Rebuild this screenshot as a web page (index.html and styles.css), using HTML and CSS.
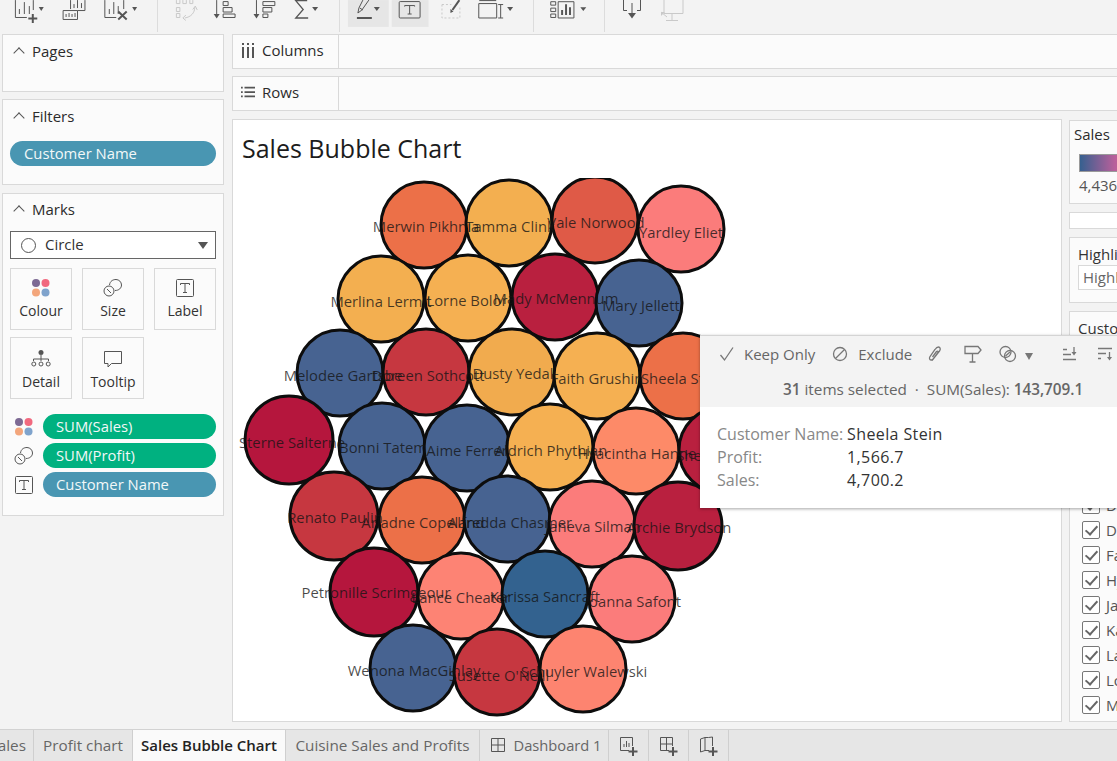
FILE: index.html
```html
<!DOCTYPE html>
<html lang="en">
<head>
  <meta charset="UTF-8" />
  <title>Sales Bubble Chart</title>
  <link rel="stylesheet" href="styles.css">
</head>
<body>
  <div class="toolbar">
    <svg class="tools tools-a" viewBox="0 0 158 32">
      <g class="ic">
        <path d="M15.500 0V17.500H27M33.500 0V10M19.500 14V9M24.500 14V2M29.500 14V6"/>
        <path class="thick" d="M33 14V23M28.500 18.500H37.500"/>
        <path class="fill" d="M39 7h5l-2.500 4z"/>
        <path d="M71 9V0M85.500 0V10.500H78M74.500 8V4M78 8V0M82 8V3"/>
        <path d="M78 10.500V19.500H63.500V10.500H78M66.500 17V14M69.500 17V13M72.500 17V14M75.500 17V13"/>
        <path d="M105.500 0V17.500H117M124.500 0V9M110 14V9M114.500 14V2M119 14V6"/>
        <path class="thick" d="M119 11.500L127.500 19.500M127.500 11.500L119 19.500"/>
        <path class="fill" d="M133 7h5l-2.500 4z"/>
      </g>
    </svg>
    <svg class="tools tools-b" viewBox="158 0 182 32">
      <g class="ic faint">
        <path d="M176.500 0V3.500H180V0M183 0V3.500H186.500V0M190 0V3.500H193V0M176.500 7.500H180V11.500H176.500ZM176.500 13.500H180V17.500H176.500ZM195 7C195 13 191 17 185 18M193 9.500L195.500 6L197.500 10M186 15L183 18L186 20.500"/>
      </g>
      <g class="ic">
        <path d="M217 0V16"/>
        <path class="fill" d="M214 14H220L217 18.500Z"/>
        <path d="M223.500 1.500H228.500V5.500H223.500ZM223.500 7.500H232.500V12H223.500ZM223.500 14H235.500V17.500H223.500Z"/>
        <path d="M257 0V16"/>
        <path class="fill" d="M254 14H260L257 18.500Z"/>
        <path d="M263.500 1.500H275.500V5.500H263.500ZM263.500 7.500H272.500V12H263.500ZM263.500 14H268.500V17.500H263.500Z"/>
        <path d="M308 0.500H296.500L304 9.500L296.500 18H309" stroke-width="1.300"/>
        <path class="fill" d="M313 7h6l-3 4z"/>
      </g>
    </svg>
    <svg class="tools tools-c" viewBox="340 0 194 32">
      <rect class="on" x="348" y="0" width="41" height="27"/>
      <rect class="on" x="392" y="0" width="37" height="27"/>
      <g class="ic">
        <path d="M363 0L359 8L358 13L362 10L369 0M360 8L363 10"/>
        <path class="thick" d="M357 18H372"/>
        <path class="fill" d="M374 7h6l-3 4z"/>
        <rect x="399.500" y="1.500" width="21" height="16.500" rx="1"/>
        <path d="M405 6.500V5.500H415V6.500M410 5.500V14M408 14H412"/>
        <path class="faint" stroke-dasharray="2 2" d="M442.500 4.500H452M442.500 4.500V18H460.500V7"/>
        <path class="thick" d="M460 0L453 10"/>
        <path class="fill" d="M451 9L454 11.500L451 13Z"/>
        <path d="M479.500 3.500H497.500V18H479.500ZM480 0.500H497M499 4.500H504M499 18H504M501.500 4.500V18"/>
        <path class="fill" d="M508 7h6l-3 4z"/>
      </g>
    </svg>
    <svg class="tools tools-d" viewBox="534 0 71 32">
      <g class="ic">
        <path d="M551 1.500H556V5H551ZM551 8H556V11.500H551ZM551 14H556V17.500H551ZM558.500 1.500H574.500V18H558.500Z"/>
        <path class="thick" d="M562.500 15V10M566.500 15V4M570.500 15V7"/>
        <path class="fill" d="M581 7h6l-3 4z"/>
      </g>
    </svg>
    <svg class="tools tools-e" viewBox="605 0 95 32">
      <g class="ic">
        <path d="M623.500 0V10.500H627M640.500 0V10.500H637M632 3V14"/>
        <path class="fill" d="M628 13H636L632 18.500Z"/>
      </g>
      <g class="ic faint">
        <path d="M664 0V13.500H683V0M672 13.500V20M666 20.500H678M661 12L667 17"/>
        <path class="light" d="M661 12H665L661 16Z"/>
      </g>
    </svg>
  </div>

  <div class="main">
    <div class="side">
      <div class="panel pages-panel">
        <div class="panel-title"><span class="chev"></span>Pages</div>
      </div>
      <div class="panel filters-panel">
        <div class="panel-title"><span class="chev"></span>Filters</div>
        <div class="pill blue">Customer Name</div>
      </div>
      <div class="panel marks-panel">
        <div class="panel-title"><span class="chev"></span>Marks</div>
        <div class="mark-select">
          <span class="ring"></span>
          <span class="mark-name">Circle</span>
          <span class="caret"></span>
        </div>
        <div class="mark-cards">
          <div class="mark-card">
            <svg width="20" height="20" viewBox="0 0 20 20"><use href="#i-colour"/></svg>
            Colour
          </div>
          <div class="mark-card">
            <svg width="20" height="20" viewBox="0 0 20 20"><use href="#i-size"/></svg>
            Size
          </div>
          <div class="mark-card">
            <svg width="20" height="20" viewBox="0 0 20 20"><use href="#i-label"/></svg>
            Label
          </div>
          <div class="mark-card low">
            <svg width="20" height="20" viewBox="0 0 20 20">
              <g class="ic">
                <circle class="fill" cx="10" cy="3.500" r="2.500"/>
                <path d="M10 6V12M2.500 12V10H17.500V12"/>
                <circle cx="2.800" cy="15" r="2"/><circle cx="10" cy="15" r="2"/><circle cx="17.200" cy="15" r="2"/>
              </g>
            </svg>
            Detail
          </div>
          <div class="mark-card low">
            <svg width="20" height="20" viewBox="0 0 20 20">
              <path class="ic" d="M1.500 2.500H18.500V14.500H8.500L5 18V14.500H1.500Z"/>
            </svg>
            Tooltip
          </div>
        </div>
        <div class="field-row">
          <svg width="20" height="20" viewBox="0 0 20 20"><use href="#i-colour"/></svg>
          <div class="pill green">SUM(Sales)</div>
        </div>
        <div class="field-row">
          <svg width="20" height="20" viewBox="0 0 20 20"><use href="#i-size"/></svg>
          <div class="pill green">SUM(Profit)</div>
        </div>
        <div class="field-row">
          <svg width="20" height="20" viewBox="0 0 20 20"><use href="#i-label"/></svg>
          <div class="pill blue">Customer Name</div>
        </div>
      </div>
    </div>

    <div class="work">
      <div class="shelf">
        <div class="shelf-name">
          <svg width="14" height="16" viewBox="0 0 14 16">
            <path class="ic thick" d="M2 5V16M7 5V16M12 5V16M2 1V3M7 1V3M12 1V3"/>
          </svg>
          Columns
        </div>
      </div>
      <div class="shelf">
        <div class="shelf-name">
          <svg width="14" height="14" viewBox="0 0 16 14">
            <path class="ic thick" d="M4 2H16M4 7H16M4 12H16M0 2H2M0 7H2M0 12H2"/>
          </svg>
          Rows
        </div>
      </div>
      <div class="view">
        <div class="chart">
          <h1 class="chart-title">Sales Bubble Chart</h1>
          <svg class="bubbles" viewBox="233 178 828 543">
            <g class="bubble-set">
              <circle cx="424" cy="225" r="43" fill="#ec7048"/>
              <circle cx="509" cy="223" r="43" fill="#f3af50"/>
              <circle cx="595" cy="220" r="43" fill="#df5a47"/>
              <circle cx="681" cy="229" r="43" fill="#fb7c7b"/>
              <circle cx="381" cy="299" r="43" fill="#f3af50"/>
              <circle cx="468" cy="298" r="43" fill="#f5b052"/>
              <circle cx="555" cy="297" r="43" fill="#b9203f"/>
              <circle cx="639" cy="303" r="43" fill="#476391"/>
              <circle cx="340" cy="373" r="43" fill="#476391"/>
              <circle cx="426" cy="372" r="43" fill="#c63740"/>
              <circle cx="512" cy="372" r="43" fill="#f1ab4e"/>
              <circle cx="597" cy="376" r="43" fill="#f5b052"/>
              <circle cx="683" cy="376" r="43" fill="#ec7048"/>
              <circle cx="289" cy="440" r="44" fill="#b5163d"/>
              <circle cx="382" cy="446" r="43" fill="#476391"/>
              <circle cx="467" cy="448" r="43" fill="#476391"/>
              <circle cx="550" cy="447" r="43" fill="#f5b052"/>
              <circle cx="636" cy="451" r="43" fill="#fd8a68"/>
              <circle cx="722" cy="450" r="43" fill="#b9203f"/>
              <circle cx="334" cy="516" r="44" fill="#c63740"/>
              <circle cx="422" cy="520" r="43" fill="#ec7048"/>
              <circle cx="507" cy="519" r="43" fill="#476391"/>
              <circle cx="592" cy="524" r="43" fill="#fb7c7b"/>
              <circle cx="678" cy="526" r="44" fill="#b9203f"/>
              <circle cx="374" cy="592" r="44" fill="#b5163d"/>
              <circle cx="461" cy="596" r="43" fill="#fd8374"/>
              <circle cx="545" cy="594" r="43" fill="#33628f"/>
              <circle cx="632" cy="599" r="43" fill="#fb7c7b"/>
              <circle cx="413" cy="668" r="43" fill="#476391"/>
              <circle cx="497" cy="672" r="43" fill="#c63740"/>
              <circle cx="583" cy="669" r="43" fill="#fd8470"/>
            </g>
            <g class="bubble-labels">
              <text x="426" y="232">Merwin Pikhnia</text>
              <text x="510" y="232">Tamma Clink</text>
              <text x="596" y="228">Vale Norwood</text>
              <text x="681" y="238">Yardley Eliet</text>
              <text x="381" y="307">Merlina Lermit</text>
              <text x="467" y="306">Lorne Bolor</text>
              <text x="556" y="304">Mady McMennum</text>
              <text x="641" y="311">Mary Jellett</text>
              <text x="343" y="381">Melodee Gartsbe</text>
              <text x="428" y="381">Doreen Sothcott</text>
              <text x="513" y="379">Dusty Yedal</text>
              <text x="597" y="384">Faith Grushin</text>
              <text x="683" y="384">Sheela Stein</text>
              <text x="292" y="448">Sterne Salterne</text>
              <text x="383" y="453">Bonni Tatem</text>
              <text x="467" y="456">Aime Ferrer</text>
              <text x="551" y="456">Aldrich Phythian</text>
              <text x="637" y="459">Hyacintha Hanne</text>
              <text x="720" y="461">Sheley Lamb</text>
              <text x="335" y="523">Renato Paulin</text>
              <text x="423" y="528">Ariadne Copeland</text>
              <text x="510" y="528">Alfredda Chasmer</text>
              <text x="593" y="532">Janeva Silman</text>
              <text x="679" y="533">Archie Brydson</text>
              <text x="376" y="598">Petronille Scrimgeour</text>
              <text x="461" y="603">Lance Cheater</text>
              <text x="545" y="602">Karissa Sancraft</text>
              <text x="633" y="607">Joanna Safont</text>
              <text x="414" y="676">Wenona MacGinlay</text>
              <text x="499" y="681">Susette O'Neill</text>
              <text x="584" y="677">Schuyler Walewski</text>
            </g>
          </svg>
        </div>

        <div class="right">
          <div class="card legend">
            <div class="legend-title">Sales</div>
            <div class="ramp"></div>
            <div class="ramp-min">4,436.4</div>
          </div>
          <div class="card blank"></div>
          <div class="card highlight">
            <div class="card-title">Highlight Customer Name</div>
            <div class="highlight-box">Highlight Customer Name</div>
          </div>
          <div class="card custom">
            <div class="card-title">Customer Name</div>
            <ul class="checks">
              <li><span class="check"></span>Dennie Stove</li>
              <li><span class="check"></span>Doreen Sothcott</li>
              <li><span class="check"></span>Faith Grushin</li>
              <li><span class="check"></span>Hyacintha Hanne</li>
              <li><span class="check"></span>Janeva Silman</li>
              <li><span class="check"></span>Karissa Sancraft</li>
              <li><span class="check"></span>Lance Cheater</li>
              <li><span class="check"></span>Lorne Bolor</li>
              <li><span class="check"></span>Mady McMennum</li>
            </ul>
          </div>
        </div>
      </div>
    </div>
  </div>

  <div class="tabs">
    <div class="tab tab-cut">Sales</div>
    <div class="tab tab-profit">Profit chart</div>
    <div class="tab tab-active">Sales Bubble Chart</div>
    <div class="tab tab-cuisine">Cuisine Sales and Profits</div>
    <div class="tab tab-dash">
      <svg width="14" height="14" viewBox="0 0 14 14"><path class="ic" d="M.5.5H13.500V13.500H.5ZM7 .5V13.500M.5 7H13.500"/></svg>
      Dashboard 1
    </div>
    <div class="tab tab-new">
      <svg width="20" height="20" viewBox="0 0 20 20"><path class="ic" d="M10 14.500H1.500V1.500H13.500V10M5 11V8M7.500 11V5M10 11V7"/><path class="ic thick" d="M14 11V20M9.500 15.500H18.500"/></svg>
    </div>
    <div class="tab tab-new">
      <svg width="20" height="20" viewBox="0 0 20 20"><path class="ic" d="M10 14.500H1.500V1.500H13.500V10M7.500 1.500V14.500M1.500 8H13.500"/><path class="ic thick" d="M14 11V20M9.500 15.500H18.500"/></svg>
    </div>
    <div class="tab tab-new">
      <svg width="20" height="20" viewBox="0 0 20 20"><path class="ic" d="M10 14.500H6L1.500 16V3L6 1.500H9.500L13.500 1V10M6 1.500V14.500"/><path class="ic thick" d="M14 11V20M9.500 15.500H18.500"/></svg>
    </div>
  </div>

  <div class="tooltip">
    <div class="tip-head">
      <div class="tip-actions">
        <svg class="a-check" width="16" height="16" viewBox="0 0 16 16"><path class="ic grey" d="M1.500 9L5.500 14L14 1.500"/></svg>
        <span class="tip-action a-keep">Keep Only</span>
        <svg class="a-no" width="16" height="16" viewBox="0 0 16 16"><circle class="ic grey" cx="8" cy="8" r="6.500"/><path class="ic grey" d="M3.500 12.500L12.500 3.500"/></svg>
        <span class="tip-action a-exclude">Exclude</span>
        <svg class="a-clip" width="16" height="16" viewBox="0 0 16 16"><path class="ic grey" d="M5 14.500L12.500 5C14 3 13 1 11.500 1C10 1 9 2 8 3.500L3 10.500C2 12 2.500 14 4 14C5.500 14 6 13 7 12L11 6.500C11.500 5.500 10.500 4.500 9.500 5.500L5.500 11"/></svg>
        <svg class="a-sign" width="18" height="18" viewBox="0 0 18 18"><path class="ic grey" d="M1 1.500H14L17 5L14 8.500H1ZM8.500 8.500V17M5.500 17H11.500"/></svg>
        <svg class="a-venn" width="18" height="18" viewBox="0 0 18 18"><circle class="ic grey" cx="6.500" cy="7" r="5.500"/><circle class="ic grey" cx="11" cy="11" r="5.500"/><path class="ic grey" d="M6.500 11L11 7"/></svg>
        <span class="caret a-caret"></span>
        <svg class="a-asc" width="16" height="14" viewBox="0 0 16 14"><path class="ic grey thick" d="M1 12.500H14M1 7.500H9M1 2.500H5M12 0V6"/><path class="fill-grey" d="M9.500 5H14.500L12 8.500Z"/></svg>
        <svg class="a-desc" width="16" height="14" viewBox="0 0 16 14"><path class="ic grey thick" d="M1 1.500H15M1 6.500H9M1 11.500H4M12.500 5V11"/><path class="fill-grey" d="M10 10H15L12.500 13.500Z"/></svg>
      </div>
      <div class="tip-summary"><b>31</b> items selected &nbsp;·&nbsp; SUM(Sales): <b>143,709.1</b></div>
    </div>
    <dl class="tip-body">
      <dt>Customer Name:</dt><dd>Sheela Stein</dd>
      <dt>Profit:</dt><dd>1,566.7</dd>
      <dt>Sales:</dt><dd>4,700.2</dd>
    </dl>
  </div>

  <svg class="defs" width="0" height="0">
    <symbol id="i-colour" viewBox="0 0 20 20">
      <circle cx="5" cy="5" r="4" fill="#7d6a94"/>
      <circle cx="14.500" cy="5" r="4" fill="#f1697f"/>
      <circle cx="5" cy="14.500" r="4" fill="#f3a67c"/>
      <circle cx="14.500" cy="14.500" r="4" fill="#7fa3cc"/>
    </symbol>
    <symbol id="i-size" viewBox="0 0 20 20">
      <circle class="ic" cx="6" cy="13" r="5"/>
      <path class="ic" d="M4 11L8 15M6.500 7C7 3 10 1.500 13 1.500C16 1.500 18.500 4 18.500 7C18.500 10 16 12.500 12 12.500"/>
    </symbol>
    <symbol id="i-label" viewBox="0 0 20 20">
      <rect class="ic" x="1.500" y="1.500" width="17" height="17" rx="1"/>
      <path class="ic" d="M5.500 7V5.500H14.500V7M10 5.500V14.500M8 14.500H12"/>
    </symbol>
  </svg>
</body>
</html>
```

FILE: styles.css
```css
html, body {
  margin: 0;
  height: 761px;
  overflow: hidden;
}
body {
  position: relative;
  width: 1117px;
  display: flex;
  flex-direction: column;
  background: #f3f3f3;
  font-family: 'Open Sans', sans-serif;
  font-size: 15px;
  color: #333;
}
.defs {
  position: absolute;
}

/* icons */
.ic {
  fill: none;
  stroke: #555;
  stroke-width: 1;
}
.ic .thick, .thick {
  stroke-width: 2;
}
.ic .fill, .fill {
  fill: #555;
  stroke: none;
}
.ic .faint, .faint {
  stroke: #c9c9c9;
}
.ic .light {
  fill: #c9c9c9;
  stroke: none;
}
.grey {
  stroke: #777;
  stroke-width: 1.3;
}
.fill-grey {
  fill: #777;
}

/* top toolbar */
.toolbar {
  height: 34px;
  display: flex;
  flex: none;
}
.tools {
  height: 32px;
  border-right: 1px solid #dcdcdc;
  box-sizing: content-box;
}
.tools-a { width: 157px; }
.tools-b { width: 181px; }
.tools-c { width: 193px; }
.tools-d { width: 70px; }
.tools-e { width: 95px; border-right: 0; }
.on {
  fill: #e6e6e6;
}

.main {
  flex: 1;
  display: flex;
  min-height: 0;
  padding-bottom: 7px;
}

/* left column */
.side {
  width: 222px;
  margin: 0 8px 0 2px;
  flex: none;
  display: flex;
  flex-direction: column;
  gap: 7px;
}
.panel {
  background: #fbfbfb;
  border: 1px solid #d9d9d9;
  box-sizing: border-box;
}
.pages-panel { height: 58px; }
.filters-panel { height: 86px; }
.marks-panel { height: 323px; margin-top: 1px; }
.panel-title {
  display: flex;
  align-items: center;
  height: 32px;
  padding-left: 10px;
  color: #2b2b2b;
}
.marks-panel .panel-title { height: 30px; }
.chev {
  width: 7px;
  height: 7px;
  margin: 4px 9px 0 2px;
  border-left: 1px solid #555;
  border-top: 1px solid #555;
  transform: rotate(45deg);
}
.pill {
  height: 25px;
  line-height: 25px;
  border-radius: 13px;
  padding-left: 13px;
  font-size: 14.800px;
  color: #f2f8f8;
}
.pill.blue { background: #4996b2; }
.pill.green { background: #00b180; }
.filters-panel .pill {
  margin: 9px 7px 0;
  padding-left: 14px;
}

.mark-select {
  height: 28px;
  margin: 7px 7px 0;
  border: 1px solid #666;
  background: #fff;
  box-sizing: border-box;
  display: flex;
  align-items: center;
  padding: 0 10px 2px;
}
.ring {
  width: 13px;
  height: 13px;
  border: 1px solid #555;
  border-radius: 50%;
  margin: 2px 9px 0 0;
}
.mark-name { flex: 1; }
.caret {
  width: 0;
  height: 0;
  border-left: 5px solid transparent;
  border-right: 5px solid transparent;
  border-top: 7px solid #555;
  margin-right: -3px;
}
.mark-select .caret { margin-top: 2px; }
.mark-cards {
  display: grid;
  grid-template-columns: repeat(3, 62px);
  grid-auto-rows: 62px;
  column-gap: 10px;
  row-gap: 7px;
  margin: 9px 7px 15px;
}
.mark-card {
  border: 1px solid #d9d9d9;
  box-sizing: border-box;
  display: flex;
  flex-direction: column;
  align-items: center;
  justify-content: center;
  gap: 3px;
  font-size: 14px;
  color: #333;
}
.mark-card.low {
  padding-top: 3px;
}
.field-row {
  display: flex;
  align-items: center;
  gap: 9px;
  height: 25px;
  margin: 0 7px 4px 11px;
}
.field-row .pill {
  flex: 1;
}

/* shelves, chart and the cards beside it */
.work {
  flex: 1;
  min-width: 0;
  display: flex;
  flex-direction: column;
  gap: 7px;
}
.shelf {
  height: 35px;
  flex: none;
  background: #fbfbfb;
  border: 1px solid #d9d9d9;
  border-right: 0;
  box-sizing: border-box;
}
.shelf + .shelf {
  margin-bottom: 1px;
}
.shelf-name {
  width: 106px;
  height: 100%;
  border-right: 1px solid #d9d9d9;
  display: flex;
  align-items: center;
  gap: 7px;
  padding: 0 0 4px 8px;
  box-sizing: border-box;
  color: #2b2b2b;
}
.view {
  flex: 1;
  min-height: 0;
  display: flex;
  gap: 7px;
}
.chart {
  width: 830px;
  flex: none;
  display: flex;
  flex-direction: column;
  background: #fff;
  border: 1px solid #d9d9d9;
  box-sizing: border-box;
  min-height: 0;
}
.chart-title {
  margin: 0;
  height: 58px;
  flex: none;
  box-sizing: border-box;
  padding: 10px 0 0 9px;
  font-size: 25px;
  line-height: 36px;
  font-weight: 400;
  color: #1c1c1c;
}
.bubbles {
  width: 828px;
  height: 543px;
  display: block;
}
.bubble-set circle {
  stroke: #0d0d0d;
  stroke-width: 3;
}
.bubble-labels text {
  text-anchor: middle;
  font-size: 14.800px;
  fill: rgba(20, 20, 20, 0.78);
}

.right {
  flex: 1;
  min-width: 0;
  display: flex;
  flex-direction: column;
  gap: 8px;
}
.card {
  background: #fbfbfb;
  border: 1px solid #d9d9d9;
  border-right: 0;
  box-sizing: border-box;
  overflow: hidden;
  white-space: nowrap;
}
.legend { height: 84px; padding: 3px 0 0 4px; margin-top: 1px; }
.blank { height: 17px; background: #fff; }
.highlight { height: 66px; padding: 6px 0 0 8px; }
.custom { flex: 1; padding: 6px 0 0 8px; min-height: 0; }
.legend-title { color: #2b2b2b; }
.ramp {
  width: 60px;
  height: 18px;
  margin: 10px 0 0 5px;
  background: linear-gradient(to right, #36608f, #b9609b 60%, #d8658f);
  border: 1px solid #9a9a9a;
  box-sizing: border-box;
}
.ramp-min {
  margin: 3px 0 0 5px;
  color: #555;
}
.card-title { color: #333; }
.highlight-box {
  margin-top: 1px;
  height: 25px;
  line-height: 23px;
  padding-left: 4px;
  background: #fff;
  border: 1px solid #d9d9d9;
  box-sizing: border-box;
  color: #666;
  width: 220px;
}
.checks {
  list-style: none;
  margin: 154px 0 0 4px;
  padding: 0;
}
.checks li {
  height: 25px;
  display: flex;
  align-items: center;
  gap: 6px;
  color: #555;
}
.check {
  width: 18px;
  height: 18px;
  box-sizing: border-box;
  border: 1px solid #777;
  border-radius: 2px;
  background: #fff;
  position: relative;
  flex: none;
}
.check::after {
  content: "";
  position: absolute;
  left: 5px;
  top: 1px;
  width: 5px;
  height: 10px;
  border-right: 2px solid #666;
  border-bottom: 2px solid #666;
  transform: rotate(42deg);
}

/* sheet tabs */
.tabs {
  height: 32px;
  flex: none;
  display: flex;
  background: #e6e6e6;
  border-top: 1px solid #d2d2d2;
  box-sizing: border-box;
  font-size: 15.300px;
  color: #666;
}
.tab {
  display: flex;
  align-items: center;
  justify-content: center;
  gap: 8px;
  padding-bottom: 2px;
  border-right: 1px solid #cfcfcf;
  box-sizing: border-box;
  flex: none;
  white-space: nowrap;
}
.tab-cut {
  width: 34px;
  justify-content: flex-end;
  padding-right: 7px;
  overflow: hidden;
}
.tab-profit { width: 99px; }
.tab-active {
  width: 153px;
  background: #fafafa;
  color: #222;
  font-size: 15px;
  font-weight: 600;
}
.tab-cuisine { width: 194px; }
.tab-dash { width: 129px; padding-left: 5px; font-size: 14.700px; }
.tab-new { width: 40px; padding-bottom: 0; }

/* selection tooltip */
.tooltip {
  position: absolute;
  left: 700px;
  top: 335px;
  width: 417px;
  height: 173px;
  background: #fff;
  box-shadow: 0 1px 3px rgba(0, 0, 0, 0.35);
  border-top: 1px solid #d4d4d4;
  box-sizing: border-box;
}
.tip-head {
  height: 71px;
  background: #f3f3f3;
}
.tip-actions {
  height: 36px;
  display: flex;
  align-items: center;
  color: #666;
}
.tip-action { white-space: nowrap; }
.a-check { margin-left: 19px; }
.a-keep { margin-left: 9px; }
.a-no { margin-left: 17px; }
.a-exclude { margin-left: 10px; }
.a-clip { margin-left: 15px; }
.a-sign { margin-left: 21px; }
.a-venn { margin-left: 17px; }
.a-caret { margin: 4px 0 0 8px; border-top-color: #777; border-left-width: 4.500px; border-right-width: 4.500px; }
.a-asc { margin-left: 29px; }
.a-desc { margin-left: 19px; }
.tip-summary {
  padding-left: 83px;
  line-height: 34px;
  color: #666;
  font-size: 15.300px;
  white-space: nowrap;
}
.tip-summary b { font-weight: 600; }
.tip-body {
  margin: 0;
  padding: 15px 0 0 17px;
  display: grid;
  grid-template-columns: 130px 1fr;
  grid-auto-rows: 23px;
  align-items: center;
  font-size: 16px;
}
.tip-body dt { color: #888; }
.tip-body dd { margin: 0; color: #333; letter-spacing: .4px; }
```
